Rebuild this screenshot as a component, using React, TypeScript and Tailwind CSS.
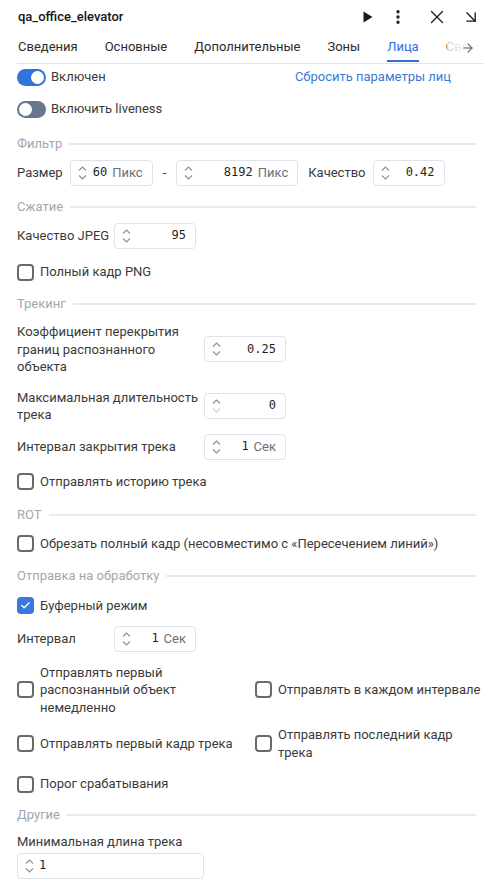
import React from "react";
import { ArrowDownRight, ArrowRight, EllipsisVertical, X, Check } from "lucide-react";

const tabs = ["Сведения", "Основные", "Дополнительные", "Зоны", "Лица", "Сверка"];

function Toggle({ on }: { on: boolean }) {
    return (
        <div
            className={
                "w-[29px] h-[17px] rounded-full flex items-center px-[2px] " +
                (on ? "bg-[#2f74dc] justify-end" : "bg-[#66788c] justify-start")
            }
        >
            <div className="w-[13px] h-[13px] rounded-full bg-white" />
        </div>
    );
}

function Section({ title, className }: { title: string; className?: string }) {
    return (
        <div className={"flex items-center gap-[7px] h-[20px] " + (className || "")}>
            <span className="text-[#a3a6ad]">{title}</span>
            <div className="flex-1 h-[2px] bg-[#e8e9f2]" />
        </div>
    );
}

function Box({ checked }: { checked?: boolean }) {
    if (checked) {
        return (
            <div className="w-[17px] h-[17px] shrink-0 rounded-[4px] bg-[#3a78e0] flex items-center justify-center">
                <Check className="w-[11px] h-[11px] text-white" strokeWidth={3} />
            </div>
        );
    }
    return <div className="w-[17px] h-[17px] shrink-0 rounded-[4px] border-2 border-[#6a6a6a]" />;
}

function CheckRow({ label, checked, className }: { label: React.ReactNode; checked?: boolean; className?: string }) {
    return (
        <div className={"flex items-center gap-[6px] " + (className || "")}>
            <Box checked={checked} />
            <span>{label}</span>
        </div>
    );
}

function Arrows({ downOff }: { downOff?: boolean }) {
    return (
        <svg width="9" height="16" viewBox="0 0 9 16" fill="none" className="shrink-0">
            <path d="M1 5.5 4.5 2 8 5.5" stroke="#8b9099" strokeWidth="1.1" />
            <path d="M1 10.5 4.5 14 8 10.5" stroke={downOff ? "#cfd2d8" : "#8b9099"} strokeWidth="1.1" />
        </svg>
    );
}

function NumInput({
    value,
    unit,
    w,
    downOff,
    left,
}: {
    value: string;
    unit?: string;
    w: string;
    downOff?: boolean;
    left?: boolean;
}) {
    return (
        <div className={"h-[26px] shrink-0 border border-[#dfe2ea] rounded-[4px] flex items-center pl-[7px] pr-[9px] " + w}>
            <Arrows downOff={downOff} />
            <div className={"flex-1 flex items-center gap-[5px] " + (left ? "justify-start pl-[5px]" : "justify-end")}>
                <span className="font-['DejaVu_Sans_Mono','Liberation_Mono',monospace] text-[12px] text-[#1f1f1f]">{value}</span>
                {unit && <span className="text-[#6b6f78]">{unit}</span>}
            </div>
        </div>
    );
}

export default function App() {
    return (
        <div className="w-[500px] h-[892px] overflow-hidden bg-white text-[13px] leading-[17.5px] text-[#3a3a3a] font-['Roboto','Noto_Sans',sans-serif]">
            {/* Header */}
            <div className="h-[34px] flex items-center pl-[18px] pr-[17px]">
                <span className="flex-1 text-[13px] font-medium text-[#161616]">qa_office_elevator</span>
                <div className="flex items-center text-[#1a1a1a]">
                    <svg width="10" height="12" viewBox="0 0 10 12" className="mr-[16px]">
                        <path d="M0.5 0.5 9.5 6 0.5 11.5Z" fill="#1a1a1a" />
                    </svg>
                    <EllipsisVertical className="w-[18px] h-[18px] mr-[19px]" strokeWidth={2.4} />
                    <X className="w-[22px] h-[22px] mr-[13px]" strokeWidth={1.4} />
                    <ArrowDownRight className="w-[20px] h-[20px] mr-[2px]" strokeWidth={1.6} />
                </div>
            </div>

            {/* Tabs */}
            <div className="mx-[17px] relative border-b border-[#dfe1ec] h-[30px] overflow-hidden">
                <div className="flex gap-[27px] pl-[1px] whitespace-nowrap text-[13px]">
                    {tabs.map((t) => (
                        <div
                            key={t}
                            className={
                                "h-[28px] pt-[4px] " +
                                (t === "Лица" ? "text-[#2f6fdb] border-b-2 border-[#2f6fdb]" : "text-[#2b2b2b]")
                            }
                        >
                            {t}
                        </div>
                    ))}
                </div>
                <div className="absolute right-0 top-0 h-[28px] w-[36px] flex items-center justify-end pr-[8px] bg-gradient-to-r from-white/75 via-white/95 to-white">
                    <ArrowRight className="w-[14px] h-[14px] text-[#555]" strokeWidth={1.8} />
                </div>
            </div>

            {/* Content */}
            <div className="pl-[17px] pr-[24px] flex flex-col">
                <div className="flex items-center h-[24px] mt-[1px]">
                    <Toggle on />
                    <span className="ml-[5px] flex-1">Включен</span>
                    <span className="text-[#3a7bd5] mr-[25px]">Сбросить параметры лиц</span>
                </div>
                <div className="flex items-center h-[24px] mt-[8px]">
                    <Toggle on={false} />
                    <span className="ml-[5px]">Включить liveness</span>
                </div>

                <Section title="Фильтр" className="mt-[13px]" />
                <div className="flex items-center mt-[6px]">
                    <span className="mr-[7px]">Размер</span>
                    <NumInput value="60" unit="Пикс" w="w-[83px]" />
                    <span className="mx-[10px]">-</span>
                    <NumInput value="8192" unit="Пикс" w="w-[122px]" />
                    <span className="ml-[10px] mr-[7px]">Качество</span>
                    <NumInput value="0.42" w="w-[72px]" />
                </div>

                <Section title="Сжатие" className="mt-[11px]" />
                <div className="flex items-center mt-[6px]">
                    <span className="w-[97px]">Качество JPEG</span>
                    <NumInput value="95" w="w-[82px]" />
                </div>
                <CheckRow label="Полный кадр PNG" className="h-[20px] mt-[13px]" />

                <Section title="Трекинг" className="mt-[12px]" />
                <div className="flex items-center mt-[9px]">
                    <span className="w-[187px]">
                        Коэффициент перекрытия
                        <br />
                        границ распознанного
                        <br />
                        объекта
                    </span>
                    <NumInput value="0.25" w="w-[82px]" />
                </div>
                <div className="flex items-center mt-[13px]">
                    <span className="w-[187px]">
                        Максимальная длительность
                        <br />
                        трека
                    </span>
                    <NumInput value="0" w="w-[82px]" downOff />
                </div>
                <div className="flex items-center mt-[10px]">
                    <span className="w-[187px]">Интервал закрытия трека</span>
                    <NumInput value="1" unit="Сек" w="w-[82px]" />
                </div>
                <CheckRow label="Отправлять историю трека" className="h-[20px] mt-[12px]" />

                <Section title="ROT" className="mt-[13px]" />
                <CheckRow
                    label="Обрезать полный кадр (несовместимо с «Пересечением линий»)"
                    className="h-[20px] mt-[9px]"
                />

                <Section title="Отправка на обработку" className="mt-[12px]" />
                <CheckRow label="Буферный режим" checked className="h-[20px] mt-[10px]" />
                <div className="flex items-center mt-[10px]">
                    <span className="w-[97px]">Интервал</span>
                    <NumInput value="1" unit="Сек" w="w-[82px]" />
                </div>

                <div className="grid grid-cols-[238px_1fr] items-center mt-[12px] gap-y-[10px]">
                    <CheckRow
                        label={
                            <>
                                Отправлять первый
                                <br />
                                распознанный объект
                                <br />
                                немедленно
                            </>
                        }
                    />
                    <CheckRow label={<span className="whitespace-nowrap">Отправлять в каждом интервале</span>} />
                    <CheckRow label="Отправлять первый кадр трека" />
                    <CheckRow
                        label={
                            <>
                                Отправлять последний кадр
                                <br />
                                трека
                            </>
                        }
                    />
                </div>
                <CheckRow label="Порог срабатывания" className="h-[20px] mt-[13px]" />

                <Section title="Другие" className="mt-[11px]" />
                <div className="mt-[8px]">Минимальная длина трека</div>
                <div className="mt-[2px]">
                    <NumInput value="1" w="w-[187px]" left />
                </div>
            </div>
        </div>
    );
}
